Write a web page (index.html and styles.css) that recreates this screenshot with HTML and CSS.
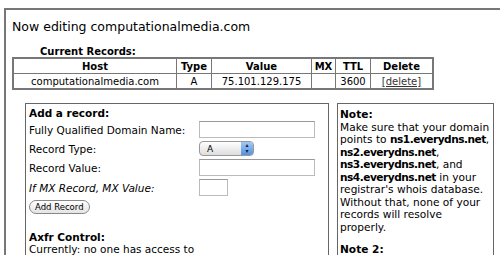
FILE: index.html
```html
<!DOCTYPE html>
<html lang="en">
<head>
  <meta charset="UTF-8" />
  <title>Now editing computationalmedia.com</title>
  <link rel="stylesheet" href="styles.css">
</head>
<body>
  <div class="panel">
    <h1>Now editing computationalmedia.com</h1>

    <table class="records">
      <caption>Current Records:</caption>
      <tr>
        <th class="host">Host</th>
        <th class="type">Type</th>
        <th class="value">Value</th>
        <th class="mx">MX</th>
        <th class="ttl">TTL</th>
        <th>Delete</th>
      </tr>
      <tr>
        <td>computationalmedia.com</td>
        <td>A</td>
        <td>75.101.129.175</td>
        <td></td>
        <td>3600</td>
        <td><a href="#">[delete]</a></td>
      </tr>
    </table>

    <div class="columns">
      <div class="box add-box">
        <h3>Add a record:</h3>
        <form class="add-form">
          <label for="fqdn">Fully Qualified Domain Name:</label>
          <input type="text" id="fqdn" class="wide">

          <label for="rtype">Record Type:</label>
          <div class="select" id="rtype"><span>A</span><span class="arrows">&#9652;<br>&#9662;</span></div>

          <label for="rvalue">Record Value:</label>
          <input type="text" id="rvalue" class="wide">

          <label for="mxval" class="italic">If MX Record, MX Value:</label>
          <input type="text" id="mxval" class="short">
        </form>
        <button type="button">Add Record</button>

        <h3 class="axfr">Axfr Control:</h3>
        <p>Currently: no one has access to</p>
      </div>

      <div class="box note-box">
        <h3>Note:</h3>
        <p>Make sure that your domain<br>
          points to <b>ns1.everydns.net</b>,<br>
          <b>ns2.everydns.net</b>,<br>
          <b>ns3.everydns.net</b>, and<br>
          <b>ns4.everydns.net</b> in your<br>
          registrar's whois database.<br>
          Without that, none of your<br>
          records will resolve<br>
          properly.</p>
        <h3 class="note2">Note 2:</h3>
      </div>
    </div>
  </div>
</body>
</html>
```

FILE: styles.css
```css
html, body {
  height: 100%;
}

body {
  font-family: 'DejaVu Sans', Verdana, sans-serif;
  font-size: 10px;
  color: #000;
  background: #fff;
  margin: 0;
  padding: 8px 0 0 4px;
  box-sizing: border-box;
  overflow: hidden;
}

.panel {
  height: 100%;
  box-sizing: border-box;
  border: 0 solid #777;
  border-width: 2px 0 0 2px;
  padding: 9px 0 0 6px;
  display: flex;
  flex-direction: column;
}

h1 {
  font-size: 12.5px;
  font-weight: normal;
  margin: 0 0 12px 0;
}

h3 {
  font-size: 10.5px;
  margin: 0;
}

.records {
  border-collapse: collapse;
  width: 422px;
  border: 2px solid #777;
}

.records caption {
  text-align: left;
  font-weight: bold;
  padding-left: 28px;
}

.records th,
.records td {
  border: 1px solid #777;
  text-align: center;
  padding: 1px 2px;
  height: 12px;
}

.records .host { width: 158px; }
.records .type { width: 30px; }
.records .value { width: 95px; }
.records .mx { width: 19px; }
.records .ttl { width: 30px; }

.records a {
  color: #333;
}

.columns {
  flex: 1;
  display: flex;
  gap: 8px;
  margin: 13px 0 0 13px;
}

.box {
  border: 1px solid #666;
  border-bottom: none;
  padding: 3px;
  box-sizing: border-box;
}

.add-box {
  width: 304px;
  font-size: 10.5px;
}

.note-box {
  width: 157px;
  font-size: 10.6px;
  line-height: 12.5px;
  padding: 4px 2px 0 2px;
  white-space: nowrap;
  overflow: hidden;
}

.note-box h3 {
  font-size: 10.6px;
}

.note-box b {
  letter-spacing: -0.5px;
}

.add-form {
  display: grid;
  grid-template-columns: 170px auto;
  row-gap: 3px;
  align-items: center;
  margin-top: 2px;
}

.add-form label.italic {
  font-style: italic;
}

.add-form input {
  height: 15px;
  border: 1px solid #bbb;
  border-top-color: #999;
  padding: 0;
  font: inherit;
}

.add-form .wide { width: 114px; }
.add-form .short { width: 27px; }

.select {
  width: 55px;
  height: 15px;
  border: 1px solid #999;
  border-radius: 4px;
  background: linear-gradient(#fff, #ddd);
  display: flex;
  align-items: center;
  justify-content: space-between;
  font-size: 9px;
  padding-left: 7px;
  box-sizing: border-box;
  overflow: hidden;
}

.select .arrows {
  width: 12px;
  height: 15px;
  background: linear-gradient(#a9cdf4, #4d8fe0);
  font-size: 6px;
  line-height: 6px;
  text-align: center;
  color: #123;
  padding-top: 1px;
  box-sizing: border-box;
}

button {
  margin-top: 4px;
  font-family: inherit;
  font-size: 8.5px;
  padding: 1px 5px;
  border: 1px solid #888;
  border-radius: 8px;
  background: linear-gradient(#fff, #e4e4e4);
}

.axfr {
  margin-top: 17px;
}

p {
  margin: 0;
}

.note2 {
  margin-top: 10px;
}
```
